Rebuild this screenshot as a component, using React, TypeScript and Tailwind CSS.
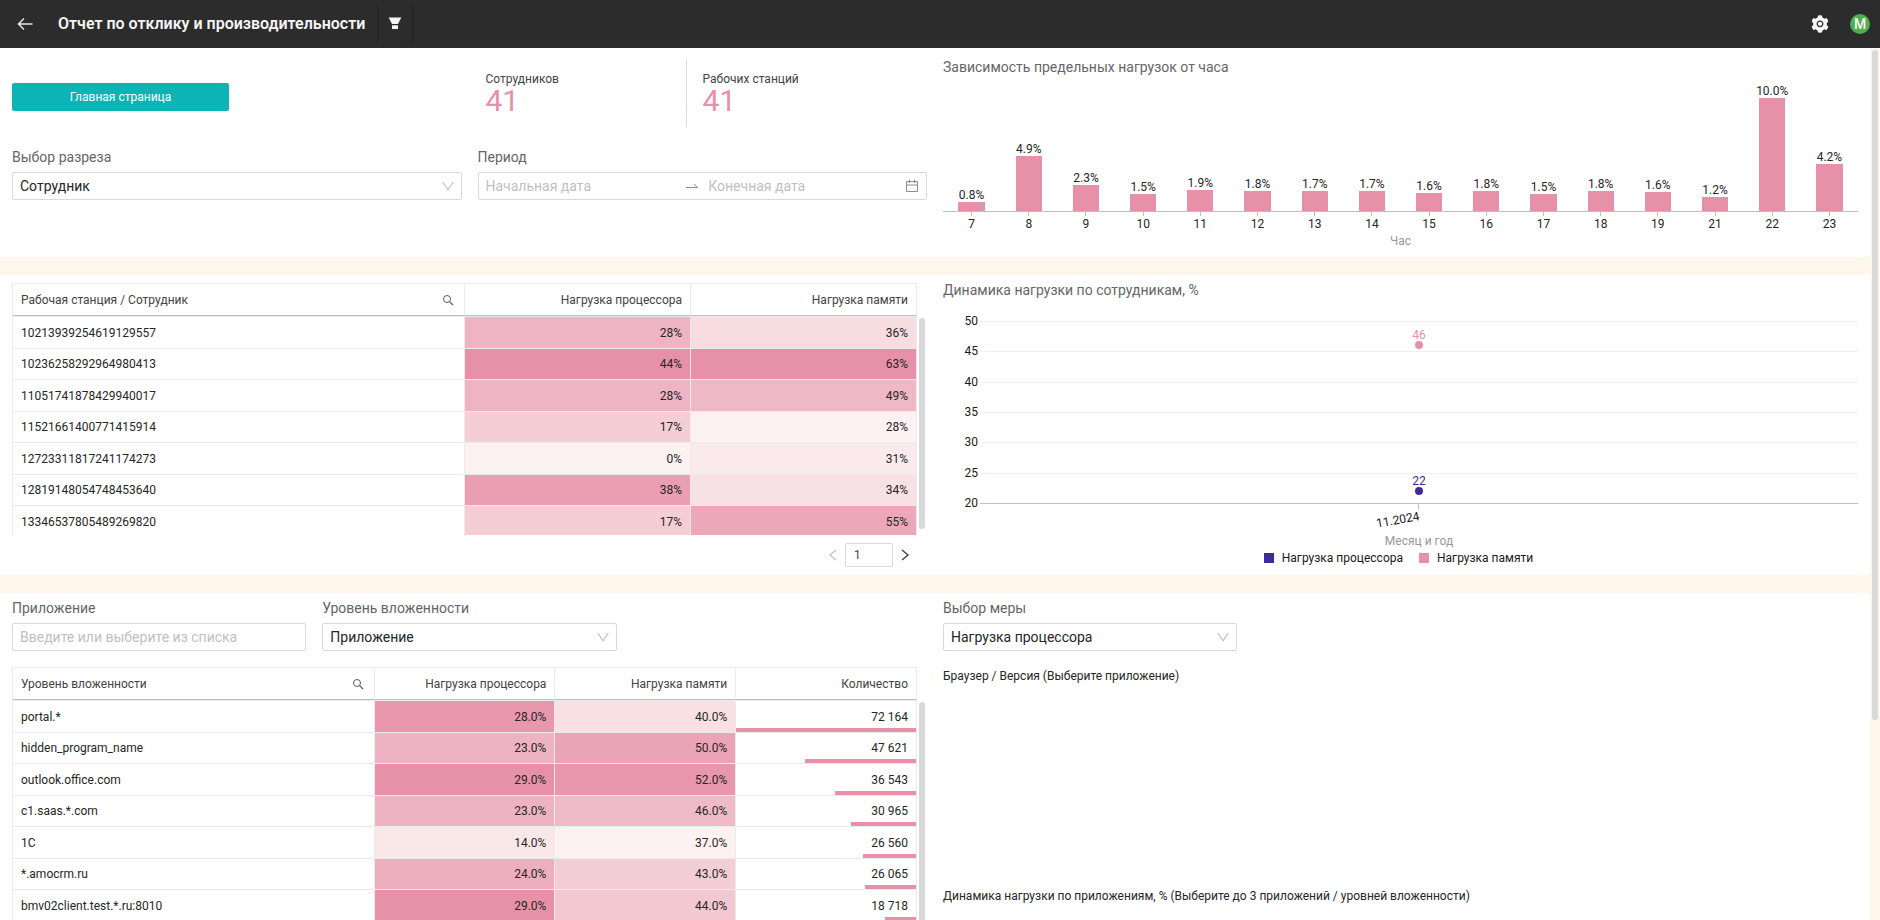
import type { ReactNode } from 'react'
import clsx from 'clsx'
import { AiFillSetting } from 'react-icons/ai'

type Rgb = [number, number, number]

interface Column {
  title: string
  width: string
  kind: 'text' | 'heat' | 'bar'
  min?: number
  max?: number
  format?: (value: number) => string
}

interface TableProps {
  columns: Column[]
  rows: (string | number)[][]
  className?: string
}

const LIGHT: Rgb = [252, 242, 241]
const DARK: Rgb = [231, 145, 168]

const hours = [
  { hour: 7, label: '0.8%', height: 9 },
  { hour: 8, label: '4.9%', height: 55 },
  { hour: 9, label: '2.3%', height: 26 },
  { hour: 10, label: '1.5%', height: 17 },
  { hour: 11, label: '1.9%', height: 21 },
  { hour: 12, label: '1.8%', height: 20 },
  { hour: 13, label: '1.7%', height: 20 },
  { hour: 14, label: '1.7%', height: 20 },
  { hour: 15, label: '1.6%', height: 18 },
  { hour: 16, label: '1.8%', height: 20 },
  { hour: 17, label: '1.5%', height: 17 },
  { hour: 18, label: '1.8%', height: 20 },
  { hour: 19, label: '1.6%', height: 19 },
  { hour: 21, label: '1.2%', height: 14 },
  { hour: 22, label: '10.0%', height: 113 },
  { hour: 23, label: '4.2%', height: 47 },
]

const employeeColumns: Column[] = [
  { title: 'Рабочая станция / Сотрудник', width: 'w-1/2', kind: 'text' },
  { title: 'Нагрузка процессора', width: 'w-1/4', kind: 'heat', min: 0, max: 44, format: (v) => `${v}%` },
  { title: 'Нагрузка памяти', width: 'w-1/4', kind: 'heat', min: 28, max: 63, format: (v) => `${v}%` },
]

const employees = [
  ['10213939254619129557', 28, 36],
  ['10236258292964980413', 44, 63],
  ['11051741878429940017', 28, 49],
  ['11521661400771415914', 17, 28],
  ['12723311817241174273', 0, 31],
  ['12819148054748453640', 38, 34],
  ['13346537805489269820', 17, 55],
]

const percent = (value: number) => `${value.toFixed(1)}%`
const thousands = (value: number) => String(value).replace(/(\d)(?=(\d{3})+$)/g, '$1 ')

const appColumns: Column[] = [
  { title: 'Уровень вложенности', width: 'w-2/5', kind: 'text' },
  { title: 'Нагрузка процессора', width: 'w-1/5', kind: 'heat', min: 12, max: 29, format: percent },
  { title: 'Нагрузка памяти', width: 'w-1/5', kind: 'heat', min: 37, max: 53, format: percent },
  { title: 'Количество', width: 'w-1/5', kind: 'bar', min: 7600, max: 72164, format: thousands },
]

const apps = [
  ['portal.*', 28, 40, 72164],
  ['hidden_program_name', 23, 50, 47621],
  ['outlook.office.com', 29, 52, 36543],
  ['c1.saas.*.com', 23, 46, 30965],
  ['1C', 14, 37, 26560],
  ['*.amocrm.ru', 24, 43, 26065],
  ['bmv02client.test.*.ru:8010', 29, 44, 18718],
]

const ratio = (value: number, { min = 0, max = 1 }: Column) => (value - min) / (max - min)

const heat = (share: number) => {
  const mixed = LIGHT.map((channel, i) => Math.round(channel + (DARK[i] - channel) * share))
  return `rgb(${mixed.join(',')})`
}

function SearchIcon() {
  return (
    <svg className="size-3" viewBox="0 0 12 12" fill="none" stroke="#595959">
      <circle cx="5" cy="5" r="3.5" />
      <path d="M7.6 7.6L11 11" strokeWidth="1.2" />
    </svg>
  )
}

function Title({ children }: { children: ReactNode }) {
  return <h2 className="text-sm leading-5 text-[#666]">{children}</h2>
}

function Field({ label, id, children }: { label: string; id: string; children: ReactNode }) {
  return (
    <div className="min-w-0">
      <label htmlFor={id} className="mb-[5px] block text-sm leading-5 text-[#666]">
        {label}
      </label>
      {children}
    </div>
  )
}

function SelectField({ label, id, value }: { label: string; id: string; value: string }) {
  return (
    <Field label={label} id={id}>
      <div className="relative">
        <select
          id={id}
          className="h-7 w-full appearance-none rounded-xs border border-[#d9d9d9] bg-white pl-[7px] pr-8 text-sm leading-5 text-[#262626]"
        >
          <option>{value}</option>
        </select>
        <svg
          className="pointer-events-none absolute top-2 right-2 h-3 w-3"
          viewBox="0 0 12 12"
          fill="none"
          stroke="#bfbfbf"
          strokeWidth="1.2"
        >
          <path d="M0.7 2L6 9.8L11.3 2" />
        </svg>
      </div>
    </Field>
  )
}

function DateRange() {
  return (
    <Field label="Период" id="date-from">
      <div className="flex h-7 items-center rounded-xs border border-[#d9d9d9] px-[7px]">
        <input
          id="date-from"
          placeholder="Начальная дата"
          className="min-w-0 flex-1 text-sm leading-5 outline-none placeholder:text-[#bfbfbf]"
        />
        <svg className="mr-2.5 h-3 w-3 shrink-0" viewBox="0 0 12 12" fill="none" stroke="#8c8c8c">
          <path d="M0 7.5H11.6L8.2 4" />
        </svg>
        <input
          id="date-to"
          aria-label="Конечная дата"
          placeholder="Конечная дата"
          className="min-w-0 flex-1 text-sm leading-5 outline-none placeholder:text-[#bfbfbf]"
        />
        <svg className="-ml-1 h-3.5 w-3.5 shrink-0" viewBox="0 0 14 14" fill="none" stroke="#8c8c8c">
          <path d="M1.5 2.5H12.5V12.5H1.5ZM1.5 6H12.5M4.5 0.5V4M9.5 0.5V4" />
        </svg>
      </div>
    </Field>
  )
}

function Stat({ label, value }: { label: string; value: number }) {
  return (
    <div className="w-[184px] pt-[11px]">
      <div className="text-xs leading-4 text-[#434343]">{label}</div>
      <div className="text-[30px] leading-7 text-[#e791a8]">{value}</div>
    </div>
  )
}

function HeatTable({ columns, rows, className }: TableProps) {
  return (
    <div className={clsx('flex', className)}>
      <div className="min-w-0 flex-1 overflow-hidden">
        <table className="w-full table-fixed border-separate border-spacing-0 border-t border-l border-[#ebebeb] text-xs leading-4">
          <thead>
            <tr className="h-8">
              {columns.map((column) => (
                <th
                  key={column.title}
                  className={clsx(
                    'border-r border-b border-r-[#ebebeb] border-b-[#bfbfbf] px-2 font-normal text-[#434343]',
                    column.width,
                    column.kind === 'text' ? 'text-left' : 'text-right',
                  )}
                >
                  {column.kind === 'text' ? (
                    <div className="flex items-center justify-between pr-0.5">
                      {column.title}
                      <button aria-label="Поиск">
                        <SearchIcon />
                      </button>
                    </div>
                  ) : (
                    column.title
                  )}
                </th>
              ))}
            </tr>
          </thead>
          <tbody>
            {rows.map((row) => (
              <tr key={row[0]} className="group h-8 first:h-[33px] even:h-[31px]">
                {columns.map((column, i) => {
                  const cell = row[i]
                  const share = typeof cell === 'number' ? ratio(cell, column) : 0
                  return (
                    <td
                      key={column.title}
                      className={clsx(
                        'relative border-r border-b border-[#ebebeb] px-2 text-[#262626] group-first:border-t',
                        column.kind !== 'text' && 'text-right',
                      )}
                      style={column.kind === 'heat' ? { backgroundColor: heat(share) } : undefined}
                    >
                      {typeof cell === 'number' ? column.format?.(cell) : cell}
                      {column.kind === 'bar' && (
                        <div
                          className="absolute right-0 bottom-0 h-1 bg-[#e791a8]"
                          style={{ width: `${share * 100}%` }}
                        />
                      )}
                    </td>
                  )
                })}
              </tr>
            ))}
          </tbody>
        </table>
      </div>
      <div className="flex w-2.5 flex-col pt-[35px] pb-1.5 pl-0.5">
        <div className="w-1.5 flex-1 rounded-full bg-[#d9d9d9]" />
      </div>
    </div>
  )
}

function Pagination() {
  return (
    <div className="flex h-10 items-center justify-end gap-[7px] pr-[17px]">
      <button aria-label="Назад" disabled>
        <svg className="h-3 w-2.5" viewBox="0 0 10 12" fill="none" stroke="#bfbfbf" strokeWidth="1.2">
          <path d="M8 1L2 6L8 11" />
        </svg>
      </button>
      <input
        aria-label="Страница"
        defaultValue="1"
        className="h-6 w-12 rounded-xs border border-[#d9d9d9] px-2 text-xs leading-4 text-[#434343]"
      />
      <button aria-label="Вперёд">
        <svg className="h-3 w-2.5" viewBox="0 0 10 12" fill="none" stroke="#434343" strokeWidth="1.4">
          <path d="M2 1L8 6L2 11" />
        </svg>
      </button>
    </div>
  )
}

function HourChart() {
  return (
    <div className="text-center text-xs text-[#262626]">
      <div className="flex h-[135px] items-end border-b border-[#bfbfbf]">
        {hours.map(({ hour, label, height }) => (
          <div key={hour} className="flex flex-1 flex-col items-center">
            <span className="leading-[14px]">{label}</span>
            <div className="w-[46%] bg-[#e791a8]" style={{ height }} />
          </div>
        ))}
      </div>
      <div className="flex">
        {hours.map(({ hour }) => (
          <div key={hour} className="flex flex-1 flex-col items-center">
            <div className="h-1 w-px bg-[#bfbfbf]" />
            <span className="leading-4">{hour}</span>
          </div>
        ))}
      </div>
      <div className="pt-px leading-4 text-[#999]">Час</div>
    </div>
  )
}

const levels = [50, 45, 40, 35, 30, 25, 20]
const levelY = (value: number) => 21 + Math.round(((50 - value) / 30) * 182)

function LoadChart() {
  const points = [
    { value: 46, color: '#e791a8' },
    { value: 22, color: '#3f2a96' },
  ]

  return (
    <div className="pl-[37px]">
      <svg className="block h-[250px] w-full overflow-visible text-xs" fill="#1a1a1a">
        {levels.map((level) => (
          <g key={level}>
            <rect y={levelY(level)} width="100%" height="1" fill={level === 20 ? '#bfbfbf' : '#f0f0f0'} />
            <text x="-2" y={levelY(level) + 4} textAnchor="end">
              {level}
            </text>
          </g>
        ))}
        <svg x="50%" className="overflow-visible">
          <rect x="-1" y="204" width="1" height="6" fill="#bfbfbf" />
          {points.map(({ value, color }) => (
            <g key={value} fill={color}>
              <circle cy={levelY(value)} r="4" />
              <text y={levelY(value) - 6} textAnchor="middle">
                {value}
              </text>
            </g>
          ))}
          <text textAnchor="end" transform="translate(1 220) rotate(-10)">
            11.2024
          </text>
          <text y="245" textAnchor="middle" fill="#999">
            Месяц и год
          </text>
        </svg>
      </svg>
    </div>
  )
}

function Header() {
  return (
    <header className="flex h-12 shrink-0 items-center bg-[#2c2c2c] pr-2.5">
      <button aria-label="Назад" className="pl-[17px]">
        <svg className="size-4" viewBox="0 0 16 16" fill="none" stroke="#e6e6e6" strokeWidth="1.5">
          <path d="M15.5 8H1.5M7 2.5L1.5 8L7 13.5" />
        </svg>
      </button>
      <h1 className="pl-[25px] text-base leading-6 font-semibold text-[#f5f5f5]">
        Отчет по отклику и производительности
      </h1>
      <button
        aria-label="Фильтр"
        className="ml-3 flex h-9 w-9 items-center justify-center border-x border-[#212121]"
      >
        <svg className="size-3.5" viewBox="0 0 14 14" fill="#f5f5f5">
          <path d="M0.7 0.5H13.3L10 7H4ZM4 8.2H10V12H4Z" />
        </svg>
      </button>
      <div className="flex-1" />
      <button aria-label="Настройки" className="mr-5">
        <AiFillSetting className="size-5 text-[#f5f5f5]" />
      </button>
      <button className="size-5 rounded-full bg-[#4caf50] text-center text-sm leading-5 font-medium text-white">
        M
      </button>
    </header>
  )
}

export default function App() {
  return (
    <div className="flex h-screen flex-col overflow-hidden bg-[#fff7eb] font-[Roboto,'Liberation_Sans',sans-serif]">
      <Header />
      <div className="flex min-h-0 flex-1">
        <main className="flex min-w-0 flex-1 flex-col gap-[18px] overflow-hidden">
          <section className="grid shrink-0 grid-cols-2 gap-4 bg-white px-3 pb-2">
            <div className="pt-3">
              <div className="grid grid-cols-2 gap-4">
                <a
                  href="#main"
                  className="mt-[23px] block h-7 w-[217px] rounded-xs bg-[#0db4b5] text-center text-xs leading-7 text-white"
                >
                  Главная страница
                </a>
                <div className="flex h-[67px] gap-4 pl-2">
                  <Stat label="Сотрудников" value={41} />
                  <div className="w-px bg-[#d9d9d9]" />
                  <Stat label="Рабочих станций" value={41} />
                </div>
              </div>
              <div className="mt-5 grid grid-cols-2 gap-4">
                <SelectField label="Выбор разреза" id="slice" value="Сотрудник" />
                <DateRange />
              </div>
            </div>
            <div className="pt-[9px]">
              <Title>Зависимость предельных нагрузок от часа</Title>
              <HourChart />
            </div>
          </section>

          <section className="grid shrink-0 grid-cols-2 gap-4 bg-white px-3">
            <div className="pt-2">
              <HeatTable columns={employeeColumns} rows={employees} className="h-[252px]" />
              <Pagination />
            </div>
            <div className="pt-[5px]">
              <Title>Динамика нагрузки по сотрудникам, %</Title>
              <LoadChart />
              <div className="flex justify-center gap-4 pr-1 text-xs leading-4 text-[#1a1a1a]">
                <div className="flex items-center gap-2">
                  <span className="size-2.5 bg-[#3f2a96]" />
                  Нагрузка процессора
                </div>
                <div className="flex items-center gap-2">
                  <span className="size-2.5 bg-[#e791a8]" />
                  Нагрузка памяти
                </div>
              </div>
            </div>
          </section>

          <section className="grid shrink-0 grid-cols-2 gap-4 bg-white px-3 pt-[5px]">
            <div>
              <div className="mb-4 grid grid-cols-3 gap-4">
                <Field label="Приложение" id="app">
                  <input
                    id="app"
                    placeholder="Введите или выберите из списка"
                    className="h-7 w-full rounded-xs border border-[#d9d9d9] px-[7px] text-sm leading-5 outline-none placeholder:text-[#bfbfbf]"
                  />
                </Field>
                <SelectField label="Уровень вложенности" id="level" value="Приложение" />
              </div>
              <HeatTable columns={appColumns} rows={apps} className="h-[400px]" />
            </div>
            <div>
              <div className="mb-[17px] grid grid-cols-3 gap-4">
                <SelectField label="Выбор меры" id="measure" value="Нагрузка процессора" />
              </div>
              <div className="h-[220px] text-xs leading-4 text-[#262626]">
                Браузер / Версия (Выберите приложение)
              </div>
              <div className="text-xs leading-4 text-[#262626]">
                Динамика нагрузки по приложениям, % (Выберите до 3 приложений / уровней вложенности)
              </div>
            </div>
          </section>
        </main>
        <div className="w-2.5 pt-0.5 pl-0.5">
          <div className="h-[77%] w-1.5 rounded-full bg-[#d9d9d9]" />
        </div>
      </div>
    </div>
  )
}
